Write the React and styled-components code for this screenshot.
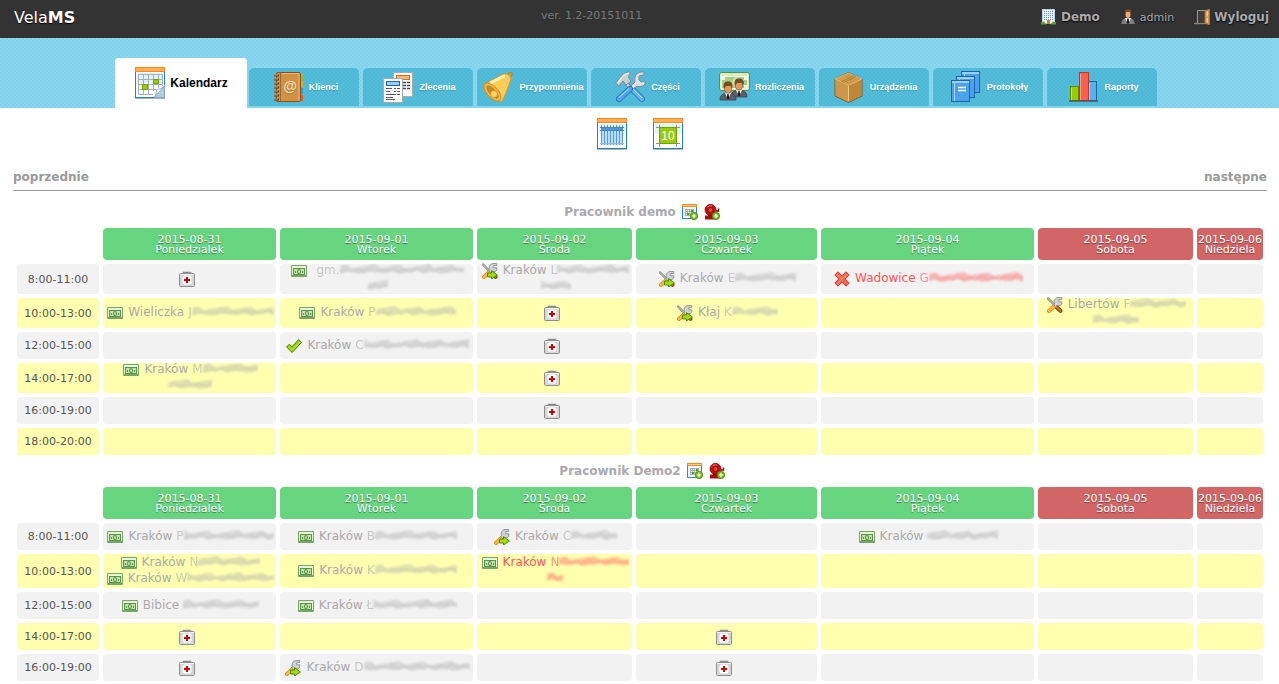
import React from "react"
import styled, { createGlobalStyle, css } from "styled-components"

const GlobalStyle = createGlobalStyle`
  body {
    margin: 0;
    background: #fff;
    font-family: "DejaVu Sans", Verdana, sans-serif;
    font-size: 12px;
    color: #a9a9ad;
  }

  a {
    color: inherit;
    text-decoration: none;
  }

  svg {
    display: block;
    flex: none;
  }
`

const weave = css`
  background-image: conic-gradient(
    rgba(0, 100, 150, 0.05) 25%,
    transparent 0 50%,
    rgba(0, 100, 150, 0.05) 0 75%,
    transparent 0
  );
  background-size: 4px 4px;
`

const TopBar = styled.header`
  display: grid;
  grid-template-columns: 42% auto 1fr;
  align-items: center;
  height: 34px;
  padding: 0 10px 4px 14px;
  background: #333;
`

const Brand = styled.a`
  font-size: 16px;
  color: #fff;
  text-shadow: 0 1px 1px #000;
`

const Version = styled.span`
  padding-bottom: 4px;
  font-size: 11px;
  color: #777;
`

const UserLinks = styled.nav`
  display: flex;
  justify-content: flex-end;
  gap: 20px;
`

const UserLink = styled.a`
  display: flex;
  align-items: center;
  gap: 4px;
  font-size: ${({ $strong }) => ($strong ? 12 : 11)}px;
  font-weight: ${({ $strong }) => ($strong ? "bold" : "normal")};
  color: #aaaaae;
  text-shadow: 0 1px 2px #000;
`

const Band = styled.nav`
  display: flex;
  justify-content: center;
  align-items: flex-end;
  gap: 4px;
  height: 70px;
  padding-right: 7px;
  background-color: #8ad7f0;
  ${weave}
`

const Tab = styled.a`
  display: flex;
  justify-content: center;
  align-items: center;
  box-sizing: border-box;
  font-family: "Liberation Sans", Arial, sans-serif;
  font-weight: bold;
  white-space: nowrap;

  ${({ $active }) =>
    $active
      ? css`
          gap: 4px;
          width: 132px;
          height: 50px;
          margin-right: -2px;
          border-radius: 4px 4px 0 0;
          background: #fff;
          font-size: 12px;
          color: #000;
        `
      : css`
          gap: 5px;
          width: 110px;
          height: 38px;
          margin-bottom: 2px;
          padding-left: 2px;
          border-radius: 5px 5px 0 0;
          background-color: #53bdd9;
          font-size: 9px;
          color: #fff;
          text-shadow: 0 1px 1px rgba(0, 70, 100, 0.3);
          ${weave}
        `}
`

const ViewSwitch = styled.div`
  display: flex;
  justify-content: center;
  gap: 24px;
  padding-top: 10px;
`

const Main = styled.main`
  padding: 0 12px 0 13px;
`

const WeekNav = styled.nav`
  display: flex;
  justify-content: space-between;
  margin: 18px 0 9px;
  padding-bottom: 4px;
  border-bottom: 1px solid #999;
  font-weight: bold;
  line-height: 18px;
  color: #999;
`

const WorkerTitle = styled.h2`
  display: flex;
  justify-content: center;
  align-items: center;
  gap: 6px;
  height: 24px;
  margin: 0;
  padding-left: 4px;
  font-size: 12px;
  color: #a9a9ad;
`

const Schedule = styled.table`
  width: 100%;
  table-layout: fixed;
  border-collapse: separate;
  border-spacing: 4px;
`

const DayHead = styled.th`
  height: 31px;
  padding: 1px 0 0;
  border-radius: 4px;
  background: ${({ $weekend }) => ($weekend ? "#d26666" : "#67d57f")};
  font-size: 11px;
  font-weight: normal;
  line-height: 10px;
  white-space: nowrap;
  color: #fff;
  text-shadow: 0 1px 1px rgba(0, 0, 0, 0.4);
`

const Row = styled.tr`
  height: ${({ $height }) => $height}px;

  > th,
  > td {
    padding: 0;
    border-radius: 4px;
    background: #f2f2f2;
  }

  &:nth-child(even) > th,
  &:nth-child(even) > td {
    background: #ffffb0;
  }
`

const Hours = styled.th`
  font-size: 11px;
  font-weight: normal;
  color: #555;
`

const Slot = styled.div`
  display: flex;
  flex-direction: column;
  justify-content: center;
  align-items: center;
  height: ${({ $height }) => $height}px;
`

const Visit = styled.a`
  display: flex;
  flex: none;
  flex-direction: column;
  align-items: center;
  padding-left: 2px;
  line-height: 16px;
  white-space: nowrap;
  color: ${({ $urgent }) => ($urgent ? "#ff5555" : "#a9a9a9")};
`

const Line = styled.span`
  display: flex;
  align-items: center;
  height: 16px;
`

const Place = styled.span`
  padding: 0 4px 2px 5px;
`

const Initial = styled.span`
  padding-bottom: 2px;
  opacity: 0.6;
  filter: blur(0.6px);
`

const DayOff = styled.a`
  padding-right: 5px;
`

const Streak = styled.svg`
  opacity: 0.75;
  filter: blur(1px);
`

/* small icons, 16px */

const Small = ({ children, ...rest }) => (
  <svg width="16" height="16" viewBox="0 0 16 16" aria-hidden="true" {...rest}>
    {children}
  </svg>
)

const CashIcon = () => (
  <Small>
    <rect x="0" y="2" width="16" height="12" rx="1" fill="#76a865" />
    <rect x="1" y="3" width="14" height="9" fill="#e6f4d8" />
    <rect x="2" y="5" width="12" height="7" fill="#5d9150" />
    <rect x="3" y="6" width="10" height="5" fill="#c3e3a4" />
    <path d="M4 8h1v2H4zM11 8h1v2h-1z" fill="#5d9150" />
    <ellipse cx="8" cy="8.500" rx="2" ry="2.500" fill="#5d9150" />
    <ellipse cx="8" cy="8.500" rx="1" ry="1.500" fill="#c3e3a4" />
  </Small>
)

const KitIcon = () => (
  <Small>
    <path d="M4.500 2.500v-1h7v1" fill="none" stroke="#8c8c8c" strokeWidth="1.500" />
    <rect x="0.500" y="2.500" width="15" height="13" rx="1" fill="#d6d6d6" stroke="#8e8e8e" />
    <path d="M1.500 3.500h13" stroke="#f4f4f4" />
    <rect x="3.500" y="4.500" width="9" height="9" rx="2.500" fill="#fff" />
    <path d="M7 6h2v2h2v2H9v2H7v-2H5V8h2z" fill="#d40000" />
  </Small>
)

const CheckIcon = () => (
  <Small>
    <path
      d="M.6 9 3.300 6.200 6 8.800 12.600 1.600 15.500 4.400 6.200 14.500z"
      fill="#9bd40c"
      stroke="#3c7d08"
      strokeLinejoin="round"
    />
    <path d="M2.200 9 6 12.600 14 4" fill="none" stroke="#c9ef55" strokeWidth="0.800" />
  </Small>
)

const CrossIcon = () => (
  <Small>
    <path
      d="M.8 4 4 .8l4 4 4-4L15.200 4l-4 4 4 4-3.200 3.200-4-4-4 4L.8 12l4-4z"
      fill="#f4654e"
      stroke="#b8402f"
      strokeLinejoin="round"
    />
    <path d="M3 3.500 8 8l5-4.500M8 8l-5 5" fill="none" stroke="#fa9a86" />
  </Small>
)

const GreenArrow = () => (
  <path
    d="M5.500 10h4V7.600L15.400 12l-5.900 4v-2h-4z"
    fill="#a5da0b"
    stroke="#3f8208"
    strokeWidth="0.900"
    strokeLinejoin="round"
  />
)

const Wrench = () => (
  <>
    <path d="M2 14 8 8.500" stroke="#d98a1c" strokeWidth="4" strokeLinecap="round" />
    <path d="M2 14 8 8.500" stroke="#ffb547" strokeWidth="2.600" strokeLinecap="round" />
    <path
      d="M7.500 6.500c-1-2.500.2-5.500 3.500-6h3.800v2h-3v2.300h3v2.500c-1.500 1.700-4 1.500-5 1L8.500 9.500 6.800 8z"
      fill="#cfd2d4"
      stroke="#80868a"
      strokeWidth="0.800"
    />
  </>
)

const ToolsIcon = ({ arrow }) => (
  <Small>
    <path d="M1 1.500 8.500 9" stroke="#6c7276" strokeWidth="2.200" strokeLinecap="round" />
    <path d="M1 1.500 8.500 9" stroke="#e1e4e6" strokeWidth="1" strokeLinecap="round" />
    <path d="m9.500 10 4 3.800" stroke="#7c420c" strokeWidth="4" strokeLinecap="round" />
    <path d="m9.500 10 4 3.800" stroke="#c27b2e" strokeWidth="2" strokeLinecap="round" />
    <Wrench />
    {arrow && <GreenArrow />}
  </Small>
)

const WrenchIcon = () => (
  <Small>
    <Wrench />
    <GreenArrow />
  </Small>
)

const PlusBadge = () => (
  <>
    <circle cx="12" cy="12" r="3.700" fill="#74b816" stroke="#4f8f10" strokeWidth="0.800" />
    <path d="M11.400 9.800h1.200v1.600h1.600v1.200h-1.600v1.600h-1.200v-1.600H9.800v-1.200h1.600z" fill="#fff" />
  </>
)

const AddVisitIcon = () => (
  <Small>
    <rect x="0.500" y="0.500" width="14" height="14" fill="#f3faff" stroke="#2b8ec4" />
    <path d="M0 0h15v3H0z" fill="#f68a1c" />
    <path d="M1 1h13v1H1z" fill="#ffd092" />
    <path d="M3 5.500h9M3 7.500h9M3 9.500h9M3 11.500h9M3.500 5v7M5.500 5v7M7.500 5v7M9.500 5v7M11.500 5v7" stroke="#9aa8b0" strokeWidth="0.800" />
    <path d="M9 6h2v2H9zM5 9h2v2H5z" fill="#5c9c14" />
    <PlusBadge />
  </Small>
)

const AddAlarmIcon = () => (
  <Small>
    <path d="M12 7h2.500V4.500" fill="none" stroke="#8d0d0d" strokeWidth="1.500" />
    <path d="M1 12.500h11M1 14.500h11" stroke="#a30d0d" strokeWidth="1.800" />
    <path d="M4 10h5v2H4z" fill="#8d0d0d" />
    <circle cx="6.500" cy="5.800" r="5.500" fill="#c2100f" stroke="#860808" strokeWidth="0.800" />
    <circle cx="6.500" cy="6" r="2.500" fill="#e0463c" stroke="#8b0a0a" />
    <path d="M3 3.500C4 2 6 1.500 8 2" fill="none" stroke="#f28379" />
    <PlusBadge />
  </Small>
)

const OfficeIcon = () => (
  <Small>
    <rect x="1.500" y="0.500" width="12" height="14" fill="#e3eef7" stroke="#c3d5e3" />
    <path d="M3 2.500h9M3 4.500h9M3 6.500h9M3 8.500h9M3 10.500h9" stroke="#7698b8" strokeDasharray="1 1" />
    <path d="M6 11h3v4H6z" fill="#e17c21" />
    <path d="M0 15.500v-2l3-1 2.500 3zM15 15.500v-2l-3-1-2.500 3z" fill="#58a61a" />
  </Small>
)

const PersonIcon = () => (
  <Small>
    <path d="M1.500 15c0-4 2-5.500 5-6h3c3 .5 5 2 5 6z" fill="#808083" />
    <path d="m5 9 3 6 3-6z" fill="#fff" />
    <path d="M7.300 9.500h1.400l.6 4.500L8 15l-1.300-1z" fill="#111" />
    <ellipse cx="8" cy="5.500" rx="2.500" ry="3.500" fill="#e5ad77" />
    <path d="M5 5C4.500 1 6 .5 8 .5s3.500.5 3 4.500L9.500 3H6.500z" fill="#8c4d1a" />
  </Small>
)

const DoorIcon = () => (
  <Small>
    <path d="M0 14.500h12" stroke="#8d8177" strokeWidth="1.500" />
    <path d="M3.500 14V1.500h9V14" fill="#3d3d3d" stroke="#a79a90" />
    <path d="m11 2 4.500-2v16L11 14z" fill="#d99548" stroke="#b0743a" strokeWidth="0.800" />
    <path d="m12.500 3 1.500-.8v5l-1.500.3zM12.500 9l1.500.2v4.300l-1.500-.5z" fill="#f4cd96" />
  </Small>
)

/* big icons, 32px */

const Big = ({ children }) => (
  <svg width="32" height="32" viewBox="0 0 32 32" aria-hidden="true">
    {children}
  </svg>
)

const CalendarFrame = () => (
  <>
    <path d="M1 31.500h30" stroke="#000" strokeOpacity="0.300" />
    <rect x="1.500" y="1.500" width="29" height="29" fill="#fff" stroke="#1f83b8" />
    <path d="M3 6h26v10H3z" fill="#dff2fd" />
    <rect x="1.500" y="0.500" width="29" height="4" fill="#ffae55" stroke="#f78a1e" />
  </>
)

const CalendarIcon = () => (
  <Big>
    <CalendarFrame />
    <path
      d="M4 7.500h24M4 12.500h24M4 17.500h24M4 22.500h18M4 27.500h15M4.500 7v21M9.500 7v21M14.500 7v21M19.500 7v17M24.500 7v14M28.500 7v12"
      stroke="#a5b0b8"
    />
    <path d="M19.500 12.500h5v4h-5zM8.500 17.500h5v5h-5z" fill="#9bcb00" stroke="#6c9f00" />
    <path d="M20 31c1-2 2-5 2-8 3-.5 6-2 9-5v13z" fill="#b7cad8" />
    <path d="M20 30.500c2-2 3-5 2.500-8 3 0 6-1 8.500-4z" fill="#f6fafd" stroke="#7f9db4" strokeWidth="0.700" />
    <path d="M30.500 18.500v12H20" fill="none" stroke="#6d9fc2" strokeWidth="0.800" />
  </Big>
)

const ContactsIcon = () => (
  <Big>
    <path d="M27 3h4v6h-4z" fill="#93bf3f" />
    <path d="M27 10h4v6h-4z" fill="#efa52a" />
    <path d="M27 17h4v6h-4z" fill="#3f97d8" />
    <path d="M27 24h4v6h-4z" fill="#dd5b31" />
    <rect x="4.500" y="1.500" width="24" height="29" rx="1.500" fill="#d29243" stroke="#8a521b" />
    <path d="M8.500 2v28" stroke="#a0692a" />
    <path d="M9.500 2.500h17.500v27" fill="none" stroke="#e7b673" />
    <path d="M2 4.500h5M2 8.500h5M2 12.500h5M2 16.500h5M2 20.500h5M2 24.500h5M2 28.500h5" stroke="#5d3a16" strokeWidth="2" />
    <path d="M2 4h4M2 8h4M2 12h4M2 16h4M2 20h4M2 24h4M2 28h4" stroke="#e3d6c4" strokeWidth="0.700" />
    <text x="18" y="20" fontSize="14" textAnchor="middle" fill="#f8dcb0" fontFamily="Liberation Sans">
      @
    </text>
  </Big>
)

const OrdersIcon = () => (
  <Big>
    <rect x="11.500" y="1.500" width="19" height="24" fill="#fff" stroke="#a3acb1" />
    <rect x="14.500" y="4.500" width="13" height="4" fill="#ffb66d" stroke="#d46c12" />
    <path d="M21 11.500h7M21 14.500h7M21 17.500h7" stroke="#4a4a4a" strokeWidth="1.300" strokeDasharray="3 1" />
    <rect x="1.500" y="7.500" width="19" height="24" fill="#fff" stroke="#a3acb1" />
    <rect x="4.500" y="10.500" width="13" height="4" fill="#9ccdf4" stroke="#1d67ad" />
    <path d="M4 17.500h6M12 17.500h2M15 17.500h3M12 20.500h2M15 20.500h3M4 20.500h4M4 23.500h9M4 26.500h7M12 23.500h2M15 23.500h3M4 28.500h9" stroke="#5a5a5a" strokeWidth="1.100" />
  </Big>
)

const BellIcon = () => (
  <Big>
    <path d="M26 3c1-2 4-2 4 0s-1 3-2 3z" fill="#e3a520" stroke="#b17a12" />
    <path
      d="M1.500 13C8 11 16 5 22 3c3-1 7 2 7 5-2 6-5 15-9 22-1 1-4 .5-8-2C5 24 1 18 1.500 13z"
      fill="#f9cd58"
      stroke="#d39a28"
    />
    <path d="M8 12C14 10 18 6 23 5" fill="none" stroke="#fff0ae" strokeWidth="3" />
    <ellipse cx="10.500" cy="21" rx="5.500" ry="11" transform="rotate(-42 10.500 21)" fill="#f0bb45" stroke="#cd9224" />
    <ellipse cx="10.500" cy="21" rx="3.500" ry="8.500" transform="rotate(-42 10.500 21)" fill="#c88b20" />
    <circle cx="12" cy="23" r="3.500" fill="#f7d269" stroke="#c08b1f" strokeWidth="0.700" />
  </Big>
)

const PartsIcon = () => (
  <Big>
    <path d="m12 12 5 6" stroke="#6f7a82" strokeWidth="4" />
    <path d="m12 12 5 6" stroke="#cdd4d9" strokeWidth="2.500" />
    <path d="m18 18 10 10" stroke="#1e6eae" strokeWidth="6" strokeLinecap="round" />
    <path d="m18 18 10 10" stroke="#63b3ee" strokeWidth="4.500" strokeLinecap="round" />
    <path d="m18 17 10 10" stroke="#b8e0fc" strokeWidth="1" />
    <path
      d="m17 15 4-4c-1-5 1-9 6-10h3v3l-5 1v4l2 2 4-1v3c-2 3-6 3-8 2l-4 3z"
      fill="#dce2e6"
      stroke="#7d8890"
    />
    <path d="M16 18 5 28" stroke="#1e6eae" strokeWidth="6" strokeLinecap="round" />
    <path d="M16 18 5 28" stroke="#4fa5ea" strokeWidth="4.500" strokeLinecap="round" />
    <path d="M15 17.500 5 26.500" stroke="#b8e0fc" />
    <path
      d="M1.500 12 8 4c3-3 7-3.500 9-2l-2 2c-1 2 0 4 2 6l-5 4-3-4-4 5z"
      fill="#c9d0d5"
      stroke="#7d8890"
    />
    <path d="M4 12c3-5 6-9 11-10" fill="none" stroke="#fff" />
  </Big>
)

const Businessman = ({ x, y }) => (
  <g transform={`translate(${x} ${y})`}>
    <path d="M0 18c0-5 3-6 6-7h4c3 1 6 2 6 7z" fill="#5c6068" stroke="#3c4047" strokeWidth="0.800" />
    <path d="m5 11 3 6 3-6z" fill="#fff" />
    <path d="M7.300 12h1.400l.6 5H6.700z" fill="#222" />
    <ellipse cx="8" cy="6.500" rx="3.600" ry="4.800" fill="#dc9a5e" stroke="#7d4a1f" strokeWidth="0.600" />
    <path d="M4 7C2.500 1 5-.5 8-.5s5.500 1.500 4 7.500L11 4 6 4z" fill="#774a20" />
  </g>
)

const BillingIcon = () => (
  <Big>
    <rect x="1.500" y="1.500" width="30" height="18" rx="2" fill="#d6ebc0" stroke="#628d43" />
    <rect x="3.500" y="5.500" width="26" height="12" fill="#a6cf86" stroke="#f2f8e9" />
    <path d="M4 6h3v3H4zM26 6h3v3h-3zM26 14h3v3h-3z" fill="#eef8e1" />
    <circle cx="19" cy="11" r="4.500" fill="#cfe6b8" />
    <rect x="23" y="10" width="3" height="3" fill="#5b8f3c" />
    <Businessman x={13} y={8} />
    <Businessman x={2} y={11} />
  </Big>
)

const BoxIcon = () => (
  <Big>
    <path d="M15.500 1.500 29 8v17l-13.500 6.500L2 25V8z" fill="#c98f40" stroke="#8a571b" />
    <path d="M15.500 2 29 8l-13.500 6.500L2 8z" fill="#cf9a4c" stroke="#e6bd7c" strokeWidth="0.800" />
    <path d="M15.500 15v16L2.500 24.500V9z" fill="#cc9748" />
    <path d="M15.500 15v16l13-6.500V9z" fill="#bf8838" />
    <path d="M15.500 15v15" stroke="#edc685" />
    <path d="m8 11 13-6.500M10 12l13-6.500" stroke="#a87632" strokeWidth="0.800" />
  </Big>
)

const ProtocolPage = ({ x, y }) => (
  <g transform={`translate(${x} ${y})`}>
    <rect x="0.500" y="0.500" width="18" height="21" fill="#4ba2ea" stroke="#1767ad" />
    <path d="M1 2h17" stroke="#f3fbff" />
    <path d="M3.500 3v18" stroke="#a7d5f8" />
  </g>
)

const ProtocolsIcon = () => (
  <Big>
    <ProtocolPage x={11} y={0} />
    <ProtocolPage x={6} y={5} />
    <ProtocolPage x={1} y={9} />
    <path d="M8 16.500h8M8 19.500h8" stroke="#fff" strokeWidth="1.600" />
  </Big>
)

const ReportsIcon = () => (
  <Big>
    <rect x="3.500" y="15.500" width="8" height="14" fill="#9cc806" stroke="#5d8f00" />
    <rect x="21.500" y="10.500" width="8" height="19" fill="#5ab0ec" stroke="#1668a8" />
    <rect x="12.500" y="1.500" width="9" height="28" fill="#f8604c" stroke="#c23424" />
    <path d="M4.500 17v12M13.500 3v26M22.500 12v17" stroke="#fff" strokeOpacity="0.400" />
    <path d="M2 30h29" stroke="#545454" strokeWidth="1.500" />
  </Big>
)

const WeekViewIcon = () => (
  <Big>
    <CalendarFrame />
    <path d="M5 10h22v17H5z" fill="#b5e0fb" />
    <path d="M5 10h22v2H5z" fill="#4a94d6" />
    <path
      d="M5.500 7v20M8.500 7v20M11.500 7v20M14.500 7v20M17.500 7v20M20.500 7v20M23.500 7v20M26.500 7v20"
      stroke="#5e9bcc"
    />
    <path d="M4 9.500h24M4 12.500h24" stroke="#3f85c4" />
    <path d="M4 25.500h24" stroke="#8fb4cc" strokeWidth="0.800" />
  </Big>
)

const DayViewIcon = () => (
  <Big>
    <CalendarFrame />
    <path d="M4 9.500h24M4 25.500h24M7.500 7v22M24.500 7v22" stroke="#8a969c" />
    <rect x="7.500" y="9.500" width="17" height="16" fill="#99cb05" stroke="#6ba300" />
    <text x="16" y="22" fontSize="12" textAnchor="middle" fill="#fff" fontFamily="Liberation Sans">
      10
    </text>
  </Big>
)

const icons = {
  cash: <CashIcon />,
  check: <CheckIcon />,
  cross: <CrossIcon />,
  tools: <ToolsIcon />,
  toolsArrow: <ToolsIcon arrow />,
  wrench: <WrenchIcon />,
}

const tabs = [
  { label: "Kalendarz", icon: <CalendarIcon />, active: true },
  { label: "Klienci", icon: <ContactsIcon /> },
  { label: "Zlecenia", icon: <OrdersIcon /> },
  { label: "Przypomnienia", icon: <BellIcon /> },
  { label: "Części", icon: <PartsIcon /> },
  { label: "Rozliczenia", icon: <BillingIcon /> },
  { label: "Urządzenia", icon: <BoxIcon /> },
  { label: "Protokoły", icon: <ProtocolsIcon /> },
  { label: "Raporty", icon: <ReportsIcon /> },
]

// widths are shares: the fixed table layout scales them with the page
const columns = [82, 173, 193, 155, 181, 213, 155, 66]

const days = [
  { date: "2015-08-31", name: "Poniedzialek" },
  { date: "2015-09-01", name: "Wtorek" },
  { date: "2015-09-02", name: "Środa" },
  { date: "2015-09-03", name: "Czwartek" },
  { date: "2015-09-04", name: "Piątek" },
  { date: "2015-09-05", name: "Sobota", weekend: true },
  { date: "2015-09-06", name: "Niedziela", weekend: true },
]

const off = "off"

const visit = (icon, place, initial, hidden, more = 0, urgent = false) => ({
  icon,
  place,
  initial,
  hidden,
  more,
  urgent,
})

// slots are keyed by the day index
const workers = [
  {
    name: "Pracownik demo",
    rows: [
      {
        hours: "8:00-11:00",
        height: 30,
        slots: {
          0: [off],
          1: [visit("cash", "", "gm.", 124, 20)],
          2: [visit("toolsArrow", "Kraków", "L", 72, 30)],
          3: [visit("toolsArrow", "Kraków", "E", 61)],
          4: [visit("cross", "Wadowice", "G", 94, 0, true)],
        },
      },
      {
        hours: "10:00-13:00",
        height: 30,
        slots: {
          0: [visit("cash", "Wieliczka", "J", 82)],
          1: [visit("cash", "Kraków", "P", 80)],
          2: [off],
          3: [visit("toolsArrow", "Kłaj", "K", 46)],
          5: [visit("tools", "Libertów", "F", 56, 46)],
        },
      },
      {
        hours: "12:00-15:00",
        height: 27,
        slots: { 1: [visit("check", "Kraków", "C", 105)], 2: [off] },
      },
      {
        hours: "14:00-17:00",
        height: 30,
        slots: { 0: [visit("cash", "Kraków", "M", 55, 44)], 2: [off] },
      },
      { hours: "16:00-19:00", height: 27, slots: { 2: [off] } },
      { hours: "18:00-20:00", height: 27, slots: {} },
    ],
  },
  {
    name: "Pracownik Demo2",
    rows: [
      {
        hours: "8:00-11:00",
        height: 27,
        slots: {
          0: [visit("cash", "Kraków", "P", 90)],
          1: [visit("cash", "Kraków", "B", 82)],
          2: [visit("wrench", "Kraków", "C", 46)],
          4: [visit("cash", "Kraków", "", 71)],
        },
      },
      {
        hours: "10:00-13:00",
        height: 34,
        slots: {
          0: [
            visit("cash", "Kraków", "N", 62),
            visit("cash", "Kraków", "W", 87),
          ],
          1: [visit("cash", "Kraków", "K", 82)],
          2: [visit("cash", "Kraków", "N", 70, 16, true)],
        },
      },
      {
        hours: "12:00-15:00",
        height: 27,
        slots: {
          0: [visit("cash", "Bibice", "", 76)],
          1: [visit("cash", "Kraków", "Ł", 84)],
        },
      },
      { hours: "14:00-17:00", height: 27, slots: { 0: [off], 3: [off] } },
      {
        hours: "16:00-19:00",
        height: 27,
        slots: {
          0: [off],
          1: [visit("wrench", "Kraków", "D", 106)],
          3: [off],
        },
      },
    ],
  },
]

// street names are rubbed out, only an uneven streak is left of them
const Redacted = ({ width }) => {
  const steps = Math.round(width / 6)
  const top = []
  const bottom = []
  const strokes = []

  for (let i = 0; i <= steps; i++) {
    const x = Math.round((i * width) / steps)
    const rise = ((i * 7 + width * 3) % 9) / 2
    const drop = ((i * 5 + width) % 7) / 2
    top.push(`${x},${1 + rise}`)
    bottom.unshift(`${x},${8 + drop}`)
    strokes.push(`${x},${i % 2 ? 2 + rise : 10}`)
  }

  return (
    <Streak width={width} height="16" viewBox={`0 0 ${width} 16`} aria-hidden="true">
      <polygon points={[...top, ...bottom].join(" ")} fill="currentColor" opacity="0.45" />
      <polyline points={strokes.join(" ")} fill="none" stroke="currentColor" opacity="0.5" />
      <path d={`M0 8 L${width} 6`} stroke="currentColor" strokeWidth="2" opacity="0.25" />
    </Streak>
  )
}

const SlotEntry = ({ entry }) => {
  if (entry === off) {
    return (
      <DayOff href="#" aria-label="Nieobecność">
        <KitIcon />
      </DayOff>
    )
  }

  return (
    <Visit href="#" $urgent={entry.urgent}>
      <Line>
        {icons[entry.icon]}
        <Place>{entry.place}</Place>
        {entry.initial && <Initial>{entry.initial}</Initial>}
        <Redacted width={entry.hidden} />
      </Line>
      {entry.more > 0 && (
        <Line>
          <Redacted width={entry.more} />
        </Line>
      )}
    </Visit>
  )
}

const WorkerSchedule = ({ name, rows }) => (
  <section>
    <WorkerTitle>
      {name}
      <a href="#" aria-label="Dodaj zlecenie">
        <AddVisitIcon />
      </a>
      <a href="#" aria-label="Dodaj przypomnienie">
        <AddAlarmIcon />
      </a>
    </WorkerTitle>
    <Schedule>
      <colgroup>
        {columns.map((width, i) => (
          <col key={i} width={width} />
        ))}
      </colgroup>
      <thead>
        <tr>
          <td />
          {days.map(({ date, name, weekend }) => (
            <DayHead key={date} scope="col" $weekend={weekend}>
              {date}
              <br />
              {name}
            </DayHead>
          ))}
        </tr>
      </thead>
      <tbody>
        {rows.map(({ hours, height, slots }) => (
          <Row key={hours} $height={height}>
            <Hours scope="row">{hours}</Hours>
            {days.map(({ date }, i) => (
              <td key={date}>
                <Slot $height={height}>
                  {(slots[i] || []).map((entry, n) => (
                    <SlotEntry key={n} entry={entry} />
                  ))}
                </Slot>
              </td>
            ))}
          </Row>
        ))}
      </tbody>
    </Schedule>
  </section>
)

const App = () => (
  <>
    <GlobalStyle />
    <TopBar>
      <Brand href="#">
        Vela<b>MS</b>
      </Brand>
      <Version>ver. 1.2-20151011</Version>
      <UserLinks>
        <UserLink href="#" $strong>
          <OfficeIcon />
          Demo
        </UserLink>
        <UserLink href="#">
          <PersonIcon />
          admin
        </UserLink>
        <UserLink href="#" $strong>
          <DoorIcon />
          Wyloguj
        </UserLink>
      </UserLinks>
    </TopBar>
    <Band>
      {tabs.map(({ label, icon, active }) => (
        <Tab key={label} href="#" $active={active}>
          {icon}
          {label}
        </Tab>
      ))}
    </Band>
    <ViewSwitch>
      <a href="#" aria-label="Tydzień">
        <WeekViewIcon />
      </a>
      <a href="#" aria-label="Dzień">
        <DayViewIcon />
      </a>
    </ViewSwitch>
    <Main>
      <WeekNav>
        <a href="#">poprzednie</a>
        <a href="#">następne</a>
      </WeekNav>
      {workers.map(worker => (
        <WorkerSchedule key={worker.name} {...worker} />
      ))}
    </Main>
  </>
)

export default App
